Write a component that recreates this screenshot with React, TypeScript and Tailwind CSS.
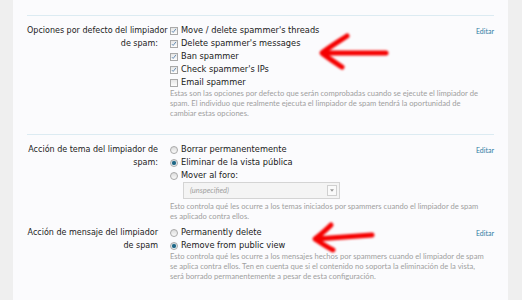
import React from 'react';

const labelFont = { fontFamily: '"DejaVu Sans", Verdana, sans-serif' };

function Check({ checked }: { checked: boolean }) {
  return (
    <span className="relative mr-[3px] inline-block h-[8px] w-[8px] shrink-0 border border-[#a9a9a9] bg-gradient-to-b from-[#e6e6e6] to-[#fdfdfd]">
      {checked && (
        <svg viewBox="0 0 8 8" className="absolute left-0 top-0 h-[6px] w-[6px]">
          <path d="M1.2 4.2 L2.9 5.9 L6.6 1.2" fill="none" stroke="#4a78a8" strokeWidth="1.1" />
        </svg>
      )}
    </span>
  );
}

function Radio({ checked }: { checked: boolean }) {
  return (
    <span className="mr-[3px] inline-flex h-[8px] w-[8px] shrink-0 items-center justify-center rounded-full border border-[#a9a9a9] bg-gradient-to-b from-[#dcdcdc] to-[#fafafa]">
      {checked && <span className="h-[4px] w-[4px] rounded-full bg-[#1e6584] shadow-[0_0_1px_#5aa6c8]" />}
    </span>
  );
}

function Option({ kind, checked, text }: { kind: 'check' | 'radio'; checked: boolean; text: string }) {
  return (
    <div className="flex h-[13px] items-center text-[8.25px] text-[#1a1a1a]" style={labelFont}>
      {kind === 'check' ? <Check checked={checked} /> : <Radio checked={checked} />}
      <span className="whitespace-nowrap">{text}</span>
    </div>
  );
}

function Row({ label, children, desc }: { label: string[]; children: React.ReactNode; desc: string[] }) {
  return (
    <div className="flex">
      <div className="w-[131px] shrink-0 text-right text-[8px] leading-[13px] text-[#222]" style={labelFont}>
        {label.map((l) => (
          <div key={l} className="whitespace-nowrap">{l}</div>
        ))}
      </div>
      <div className="ml-[12px] min-w-0 flex-1">
        {children}
        <div className="mt-[-1px] text-[7.6px] leading-[10px] text-[#a0a0a0]" style={{ fontFamily: 'Lato, "Open Sans", sans-serif' }}>
          {desc.map((d) => (
            <div key={d} className="whitespace-nowrap">{d}</div>
          ))}
        </div>
      </div>
      <div className="w-[20px] shrink-0 pt-[3px] text-right text-[7px] leading-[8px] text-[#2b7ba3]" style={{ fontFamily: 'Lato, sans-serif' }}>
        Editar
      </div>
    </div>
  );
}

export default function App() {
  return (
    <div className="relative flex h-[300px] w-[522px] overflow-hidden bg-[#efefef]">
      <div className="ml-[13px] w-[495px] bg-[#fbfbfd] pl-[14px] pr-[14px]">
        <div className="h-[15px]" />
        <div className="h-px bg-[#dcebf2]" />
        <div className="pb-[16px] pt-[8px]">
          <Row
            label={['Opciones por defecto del limpiador', 'de spam:']}
            desc={[
              'Estas son las opciones por defecto que serán comprobadas cuando se ejecute el limpiador de',
              'spam. El individuo que realmente ejecuta el limpiador de spam tendrá la oportunidad de',
              'cambiar estas opciones.',
            ]}
          >
            <Option kind="check" checked text="Move / delete spammer's threads" />
            <Option kind="check" checked text="Delete spammer's messages" />
            <Option kind="check" checked text="Ban spammer" />
            <Option kind="check" checked text="Check spammer's IPs" />
            <Option kind="check" checked={false} text="Email spammer" />
          </Row>
        </div>
        <div className="h-px bg-[#dcebf2]" />
        <div className="pt-[8px]">
          <Row
            label={['Acción de tema del limpiador de', 'spam:']}
            desc={[
              'Esto controla qué les ocurre a los temas iniciados por spammers cuando el limpiador de spam',
              'es aplicado contra ellos.',
            ]}
          >
            <Option kind="radio" checked={false} text="Borrar permanentemente" />
            <Option kind="radio" checked text="Eliminar de la vista pública" />
            <Option kind="radio" checked={false} text="Mover al foro:" />
            <div className="mb-[3px] ml-[13px] flex h-[17px] w-[157px] items-center justify-between border border-[#d4d4d4] bg-[#f4f4f4] pl-[6px] pr-[2px]">
              <span className="text-[7.5px] italic text-[#a0a0a0]" style={{ fontFamily: 'Lato, sans-serif' }}>
                (unspecified)
              </span>
              <span className="flex h-[11px] w-[10px] items-center justify-center border border-[#d0d0d0] bg-[#fafafa]">
                <svg viewBox="0 0 6 4" className="h-[3px] w-[4px]">
                  <path d="M0 0 L6 0 L3 4 Z" fill="#9a9a9a" />
                </svg>
              </span>
            </div>
          </Row>
        </div>
        <div className="pt-[5px]">
          <Row
            label={['Acción de mensaje del limpiador', 'de spam']}
            desc={[
              'Esto controla qué les ocurre a los mensajes hechos por spammers cuando el limpiador de spam',
              'se aplica contra ellos. Ten en cuenta que si el contenido no soporta la eliminación de la vista,',
              'será borrado permanentemente a pesar de esta configuración.',
            ]}
          >
            <Option kind="radio" checked={false} text="Permanently delete" />
            <Option kind="radio" checked text="Remove from public view" />
          </Row>
        </div>
      </div>

      <svg className="pointer-events-none absolute left-0 top-0" width="522" height="300" viewBox="0 0 522 300">
        <defs>
          <filter id="soft" x="-10%" y="-10%" width="120%" height="120%">
            <feGaussianBlur stdDeviation="0.9" />
          </filter>
        </defs>
        <g fill="none" stroke="#f50000" strokeWidth="5" strokeLinecap="round" strokeLinejoin="round" filter="url(#soft)">
          <path d="M386 53 L323 53" />
          <path d="M347 36 C338 42 328 48 322 53 C328 58 336 63 342 67" />
          <path d="M372 235 L316 239" />
          <path d="M331 225 C326 230 320 235 315 239 C321 243 327 247 333 250" />
        </g>
      </svg>
    </div>
  );
}
